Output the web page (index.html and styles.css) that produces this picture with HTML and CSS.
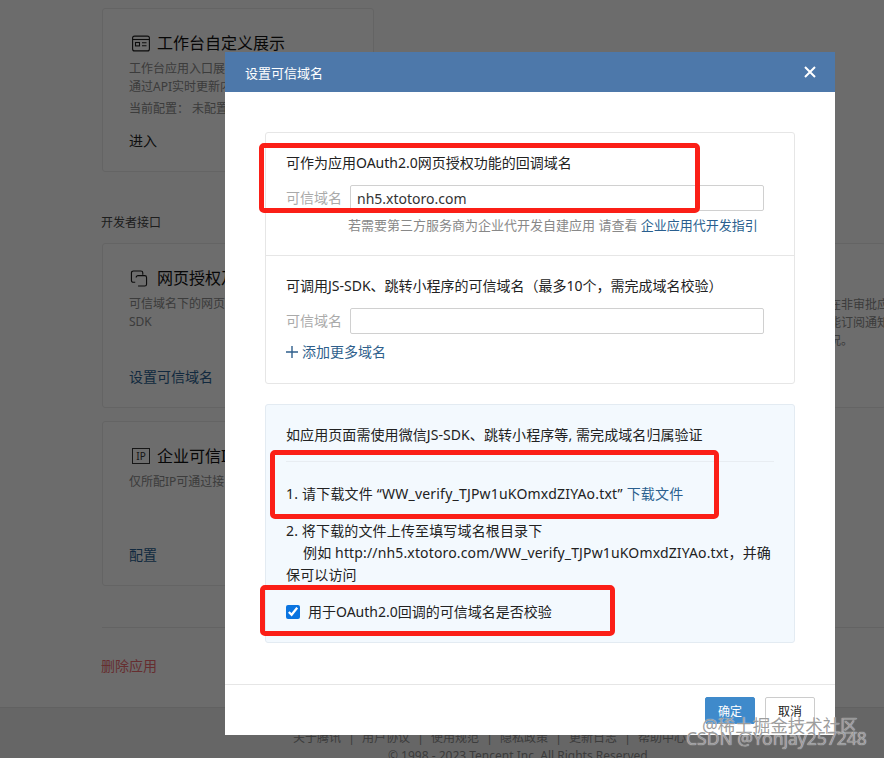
FILE: index.html
```html
<!DOCTYPE html>
<html lang="zh-CN">
<head>
<meta charset="utf-8">
<title>设置可信域名</title>
<link rel="stylesheet" href="styles.css">
</head>
<body>
<div class="page">
  <main class="main">
    <section class="card card-top">
      <h3 class="card-title">
        <svg class="icon icon-inset" viewBox="0 0 18 16" fill="none" stroke="#1c1c1c" stroke-width="1.1"><rect x="0.6" y="0.6" width="16.8" height="14.8" rx="2"/><path d="M1 4h16"/><rect x="3.5" y="7" width="4" height="3.4"/><path d="M10 7.2h4.5M10 10.2h4.5"/></svg>
        工作台自定义展示
      </h3>
      <p class="card-desc">工作台应用入口展示样式<br>通过API实时更新内容</p>
      <p class="card-config"><span class="config-label">当前配置：</span>未配置</p>
      <a class="card-link link-dark">进入</a>
    </section>
    <h4 class="section-label">开发者接口</h4>
    <div class="api-grid">
      <section class="card">
        <h3 class="card-title">
          <svg class="icon icon-wide" viewBox="0 0 18 18" fill="none" stroke="#1c1c1c" stroke-width="1.2"><path d="M5 13H3a2 2 0 0 1-2-2V3a2 2 0 0 1 2-2h8a2 2 0 0 1 2 2v2"/><path d="M6 8a2 2 0 0 1 2-2h7a2 2 0 0 1 2 2v7a2 2 0 0 1-2 2H8"/></svg>
          网页授权及JS-SDK
        </h3>
        <p class="card-desc">可信域名下的网页可使用网页授权及JS-<br>SDK</p>
        <a class="card-link">设置可信域名</a>
      </section>
      <section class="card card-right">
        <p class="card-desc">在非审批应用<br>能订阅通知<br>况。</p>
      </section>
      <section class="card">
        <h3 class="card-title">
          <span class="ip-icon">IP</span>
          企业可信IP
        </h3>
        <p class="card-desc">仅所配IP可通过接口</p>
        <a class="card-link">配置</a>
      </section>
    </div>
    <hr class="rule">
    <a class="delete-link">删除应用</a>
  </main>
  <footer class="site-footer">
    <p class="footer-links">关于腾讯<i>|</i>用户协议<i>|</i>使用规范<i>|</i>隐私政策<i>|</i>更新日志<i>|</i>帮助中心</p>
    <p class="footer-copy">© 1998 - 2023 Tencent Inc. All Rights Reserved</p>
  </footer>

  <div class="mask"></div>

  <div class="modal">
    <header class="modal-head">
      <h2 class="modal-title">设置可信域名</h2>
      <svg class="modal-close" viewBox="0 0 12 12" fill="none" stroke="#fff" stroke-width="2"><path d="M1 1l10 10M11 1L1 11"/></svg>
    </header>
    <div class="modal-body">
      <div class="domain-box">
        <div class="domain-section domain-first">
          <p class="domain-heading">可作为应用OAuth2.0网页授权功能的回调域名</p>
          <div class="field">
            <label class="field-label">可信域名</label>
            <input class="field-input" type="text" value="nh5.xtotoro.com">
          </div>
          <p class="field-hint">若需要第三方服务商为企业代开发自建应用 请查看 <a class="blue">企业应用代开发指引</a></p>
        </div>
        <div class="domain-section domain-second">
          <p class="domain-heading">可调用JS-SDK、跳转小程序的可信域名（最多10个，需完成域名校验）</p>
          <div class="field">
            <label class="field-label">可信域名</label>
            <input class="field-input" type="text">
          </div>
          <a class="add-more"><svg class="plus" viewBox="0 0 12 12" fill="none" stroke="#2f5f8c" stroke-width="1.4"><path d="M6 0v12M0 6h12"/></svg>添加更多域名</a>
        </div>
      </div>
      <div class="verify-box">
        <p class="verify-title">如应用页面需使用微信JS-SDK、跳转小程序等, 需完成域名归属验证</p>
        <p class="verify-step1">1. 请下载文件 “WW_verify_TJPw1uKOmxdZIYAo.txt” <a class="blue">下载文件</a></p>
        <p class="verify-step2">2. 将下载的文件上传至填写域名根目录下<br><span class="indent">例如 http://nh5.xtotoro.com/WW_verify_TJPw1uKOmxdZIYAo.txt，并确</span><br>保可以访问</p>
        <label class="verify-check"><input class="check" type="checkbox" checked>用于OAuth2.0回调的可信域名是否校验</label>
      </div>
    </div>
    <footer class="modal-foot">
      <button class="btn btn-primary" type="button">确定</button>
      <button class="btn" type="button">取消</button>
    </footer>
  </div>

  <div class="mark mark-a"></div>
  <div class="mark mark-b"></div>
  <div class="mark mark-c"></div>

  <div class="wm wm-juejin">@稀土掘金技术社区</div>
  <div class="wm wm-csdn">CSDN @Yonjay257248</div>
</div>
</body>
</html>
```
FILE: styles.css
```css
* { box-sizing: border-box; }
html, body { margin: 0; padding: 0; }
body { font-family: "Noto Sans", "Noto Sans CJK SC", sans-serif; color: #333; }
p, h2, h3, h4 { margin: 0; font-weight: 400; }
a { text-decoration: none; }

.page { position: relative; width: 884px; height: 758px; overflow: hidden; background: #f6f6f6; }
.main { height: 707px; padding: 8px 0 0 102px; }

.card { width: 272px; height: 165px; padding: 22px 26px 20px 26px; border: 1px solid #e4e4e4; border-radius: 3px; display: flex; flex-direction: column; background: #f7f7f7; }
.card-top { height: 164px; }
.card-title { display: flex; align-items: center; gap: 7px; height: 24px; font-size: 16px; line-height: 24px; color: #111; white-space: nowrap; }
.icon { width: 18px; height: 17px; flex: none; }
.icon-inset { margin-left: 3px; }
.icon-wide { margin-left: 1px; margin-right: 2px; }
.ip-icon { width: 18px; height: 16px; flex: none; margin-left: 3px; border: 1px solid #333; font-size: 10px; line-height: 14px; text-align: center; color: #333; }
.card-desc { margin-top: 5px; font-size: 12px; line-height: 18px; color: #888; white-space: nowrap; }
.card-config { margin-top: 4px; font-size: 12px; line-height: 18px; color: #888; }
.config-label { margin-right: 3px; }
.card-link { margin-top: auto; font-size: 14px; line-height: 20px; color: #2a5f8f; }
.link-dark { color: #222; }

.section-label { margin: 42px 0 11px -1px; font-size: 12px; line-height: 18px; color: #444; }
.api-grid { display: grid; grid-template-columns: 272px 500px; column-gap: 11px; row-gap: 13px; }
.card-right { width: 500px; padding-top: 52px; padding-left: 443px; padding-right: 0; border-right: 0; overflow: hidden; }
.card-right .card-desc { margin-top: 0; }

.rule { height: 1px; margin: 41px 0 0; border: 0; background: #e2e2e2; }
.delete-link { display: block; margin: 28px 0 0 -1px; font-size: 14px; line-height: 20px; color: #e86a6e; }

.site-footer { height: 51px; border-top: 1px solid #dcdcdc; background: #e8e8e8; font-size: 12px; color: #888; }
.footer-links { margin-top: 21px; padding-left: 293px; line-height: 18px; white-space: nowrap; }
.footer-links i { display: inline-block; width: 21px; font-style: normal; text-align: center; }
.footer-copy { padding-left: 388px; line-height: 18px; white-space: nowrap; }

.mask { position: absolute; inset: 0; background: rgba(0, 0, 0, 0.56); }

.modal { position: absolute; left: 225px; top: 52px; width: 610px; height: 683px; display: flex; flex-direction: column; background: #fff; }
.modal-head { height: 40px; flex: none; display: flex; align-items: center; justify-content: space-between; padding: 0 20px; background: #4d78aa; }
.modal-title { font-size: 13px; color: #fff; }
.modal-close { width: 12px; height: 12px; margin-right: -1px; }
.modal-body { flex: 1; padding: 40px 40px 0; }

.domain-box { border: 1px solid #e6e6e6; border-radius: 3px; }
.domain-section { padding: 0 30px 0 20px; }
.domain-first { height: 123px; padding-top: 20px; border-bottom: 1px solid #e6e6e6; }
.domain-second { height: 127px; padding-top: 20px; }
.domain-heading { font-size: 14px; line-height: 20px; color: #222; white-space: nowrap; }
.field { display: flex; align-items: center; gap: 8px; margin-top: 12px; }
.field-label { width: 56px; font-size: 14px; line-height: 20px; color: #aaa; white-space: nowrap; }
.field-input { width: 414px; height: 26px; padding: 0 6px; border: 1px solid #d0d0d0; border-radius: 2px; font: 14px "Noto Sans", sans-serif; color: #333; background: #fff; outline: none; }
.field-hint { margin: 4px 0 0 62px; font-size: 13px; line-height: 20px; color: #888; white-space: nowrap; }
.blue { color: #2a5f8f; }
.add-more { display: flex; align-items: center; gap: 4px; margin-top: 8px; font-size: 14px; line-height: 20px; color: #2f5f8c; }
.plus { width: 12px; height: 12px; }

.verify-box { height: 239px; margin-top: 20px; padding: 19px 20px 0; border: 1px solid #e3ebf2; border-radius: 3px; background: #f3f9fe; font-size: 14px; line-height: 22px; color: #222; }
.verify-title { padding-bottom: 15px; border-bottom: 1px solid #e8edf2; letter-spacing: 0.08px; white-space: nowrap; }
.verify-step1 { margin-top: 21px; letter-spacing: 0.2px; white-space: nowrap; }
.verify-step2 { margin-top: 15px; letter-spacing: 0.15px; white-space: nowrap; }
.indent { margin-left: 17px; }
.verify-check { display: flex; align-items: center; gap: 8px; margin-top: 15px; }
.check { width: 14px; height: 14px; margin: 0; accent-color: #0a74e0; }

.modal-foot { height: 51px; flex: none; display: flex; justify-content: flex-end; gap: 10px; padding: 12px 20px 0 0; border-top: 1px solid #e6e6e6; background: #fff; }
.btn { width: 50px; height: 27px; padding: 0; border: 1px solid #ccc; border-radius: 2px; font: 12px "Noto Sans CJK SC", sans-serif; color: #222; background: #fff; }
.btn-primary { border-color: #3f8acb; color: #fff; background: #3f8acb; }

.mark { position: absolute; border: 5px solid #fb1f17; border-radius: 5px; pointer-events: none; }
.mark-a { left: 259px; top: 143px; width: 441px; height: 70px; }
.mark-b { left: 270px; top: 450px; width: 449px; height: 69px; }
.mark-c { left: 260px; top: 585px; width: 355px; height: 51px; }

.wm { position: absolute; white-space: nowrap; color: rgba(140, 140, 140, 0.85); text-shadow: 0 0 1px #fff; pointer-events: none; }
.wm-juejin { left: 702px; top: 714px; font-size: 17.5px; line-height: 22px; }
.wm-csdn { left: 686px; top: 727px; font-size: 17.5px; line-height: 22px; }
```
